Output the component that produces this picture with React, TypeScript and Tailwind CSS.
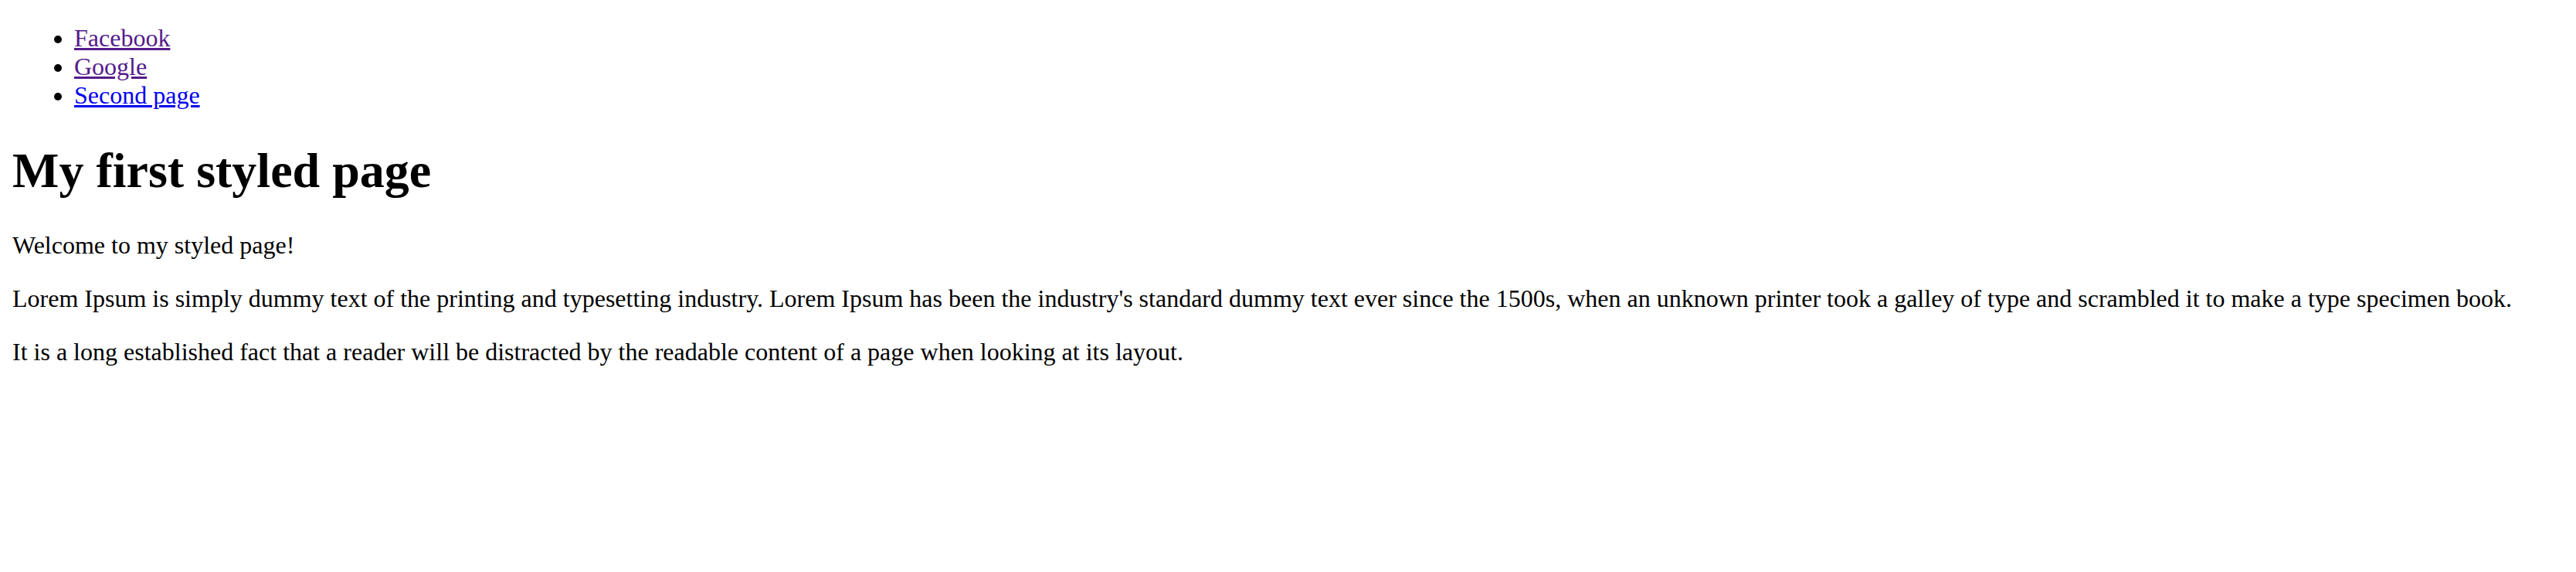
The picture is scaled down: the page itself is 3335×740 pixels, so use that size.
export default function App() {
  return (
    <div className="mx-4 font-['Liberation_Serif',_'Times_New_Roman',_serif] text-[32px] leading-[normal] text-black">
      <ul className="mt-[31px] mb-8 list-disc pl-[80px]">
        <li>
          <a href="#facebook" className="text-[#551A8B] underline">Facebook</a>
        </li>
        <li>
          <a href="#google" className="text-[#551A8B] underline">Google</a>
        </li>
        <li>
          <a href="#second" className="text-[#0000EE] underline">Second page</a>
        </li>
      </ul>
      <h1 className="my-[41.5px] text-[64px] font-bold leading-[normal]">My first styled page</h1>
      <p className="my-8">Welcome to my styled page!</p>
      <p className="my-8">
        Lorem Ipsum is simply dummy text of the printing and typesetting industry. Lorem Ipsum has been the industry's standard dummy text ever since the 1500s, when an unknown printer took a galley of type and scrambled it to make a type specimen book.
      </p>
      <p className="my-8">
        It is a long established fact that a reader will be distracted by the readable content of a page when looking at its layout.
      </p>
    </div>
  );
}
